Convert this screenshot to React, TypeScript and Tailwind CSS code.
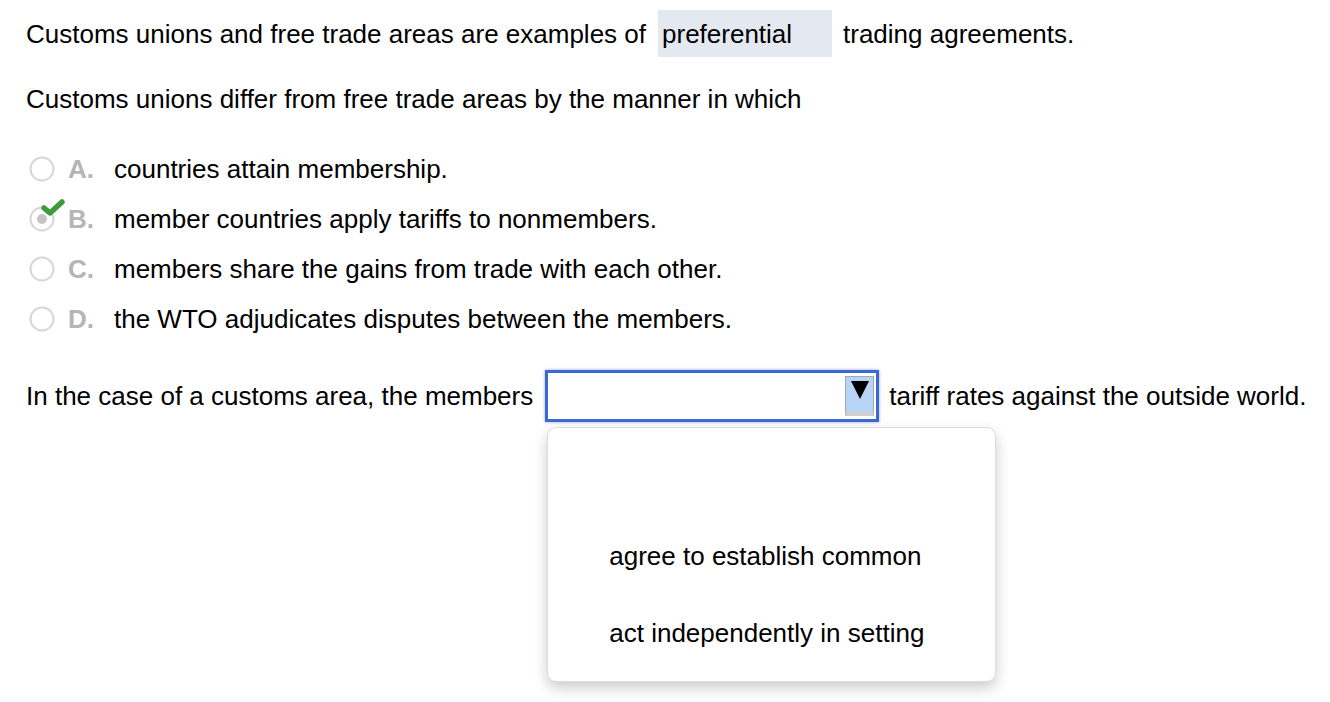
import React from "react";

const options = [
  { letter: "A.", text: "countries attain membership.", checked: false },
  { letter: "B.", text: "member countries apply tariffs to nonmembers.", checked: true },
  { letter: "C.", text: "members share the gains from trade with each other.", checked: false },
  { letter: "D.", text: "the WTO adjudicates disputes between the members.", checked: false },
];

function Radio({ checked }: { checked: boolean }) {
  return (
    <div className="relative w-[28px] h-[28px] shrink-0">
      <svg width="28" height="28" viewBox="0 0 28 28" className="absolute left-0 top-0">
        <circle cx="13" cy="14" r="11.5" fill="#fff" stroke="#d6d6d6" strokeWidth="2" />
        {checked && <circle cx="13" cy="14" r="5" fill="#c4c4c4" />}
      </svg>
      {checked && (
        <svg width="26" height="20" viewBox="0 0 26 20" className="absolute left-[12px] top-[-6px]">
          <path d="M3 9 L9 14 L21 3" fill="none" stroke="#3d9b3d" strokeWidth="5.5" strokeLinecap="round" strokeLinejoin="round" />
        </svg>
      )}
    </div>
  );
}

export default function App() {
  return (
    <div className="min-h-[702px] bg-white text-black pl-[26px] pt-[10px] text-[26px] leading-[30px] font-['Liberation_Sans',Arial,sans-serif]">
      {/* first sentence with answered blank */}
      <div className="flex items-center h-[47px]">
        <span>Customs unions and free trade areas are examples of</span>
        <span className="ml-[12px] w-[174px] h-[47px] bg-[#e3e8f1] pl-[4px] flex items-center">preferential</span>
        <span className="ml-[11px]">trading agreements.</span>
      </div>

      <div className="mt-[27px]">Customs unions differ from free trade areas by the manner in which</div>

      <div className="mt-[30px] flex flex-col">
        {options.map((o) => (
          <div key={o.letter} className="h-[50px] flex items-center pl-[3px]">
            <Radio checked={o.checked} />
            <span className="ml-[11px] w-[46px] font-bold text-[#b5b5b5]">{o.letter}</span>
            <span>{o.text}</span>
          </div>
        ))}
      </div>

      <div className="mt-[26px] flex items-center relative">
        <span>In the case of a customs area, the members</span>
        <div className="relative ml-[12px]">
          <div className="w-[334px] h-[52px] border-[3px] border-[#3c69cf] shadow-[0_0_3px_rgba(60,105,207,0.6)] bg-white flex items-center justify-end pr-[2px]">
            <div className="w-[29px] h-[40px] bg-[#b6d4f6] border border-[#a8a8a8] border-b-[4px] border-b-[#cfcfcf] flex items-start justify-center pt-[3px]">
              <svg width="20" height="20" viewBox="0 0 20 20">
                <polygon points="1,1 19,1 10,19" fill="#000" />
              </svg>
            </div>
          </div>
          {/* open dropdown list */}
          <div className="absolute left-[2px] top-[57px] w-[449px] h-[255px] bg-white rounded-[9px] border border-[#dcdcdc] shadow-[0_6px_14px_rgba(0,0,0,0.2)] py-[12px] z-10">
            <div className="h-[77px]" />
            <div className="h-[77px] flex items-center pl-[61px]">agree to establish common</div>
            <div className="h-[77px] flex items-center pl-[61px]">act independently in setting</div>
          </div>
        </div>
        <span className="ml-[10px]">tariff rates against the outside world.</span>
      </div>
    </div>
  );
}
